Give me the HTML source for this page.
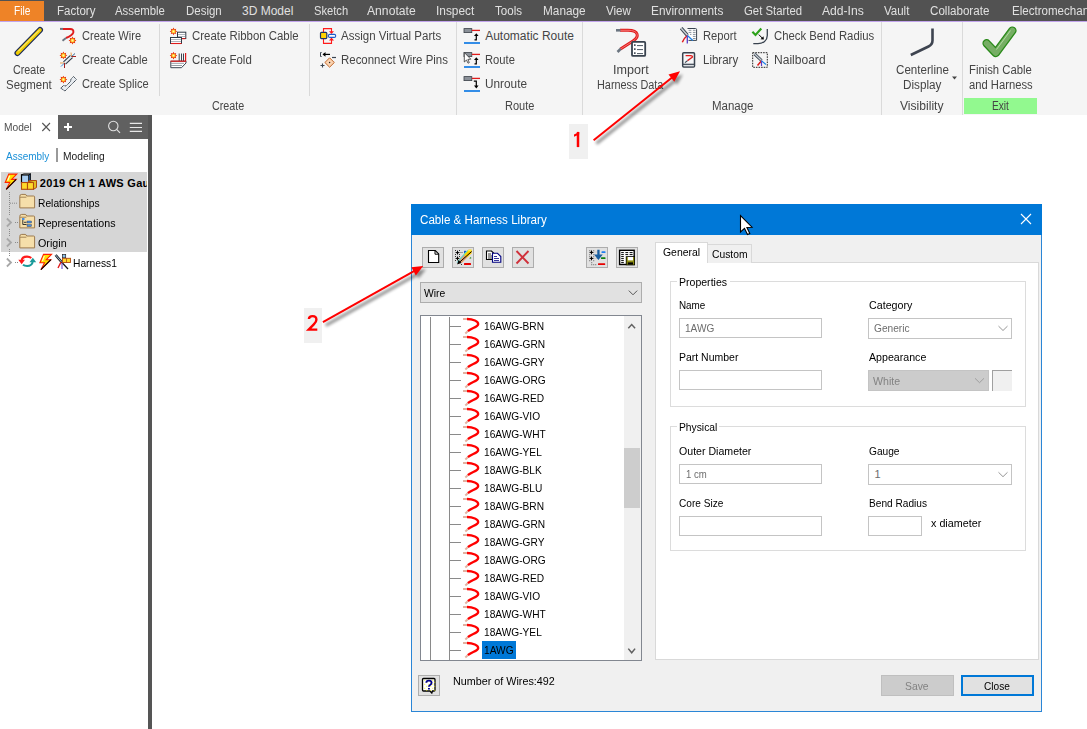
<!DOCTYPE html>
<html><head><meta charset="utf-8"><style>
html,body{margin:0;padding:0;width:1087px;height:729px;overflow:hidden;background:#fff;}
body{position:relative;font-family:"Liberation Sans", sans-serif;}
.t{position:absolute;line-height:1;white-space:nowrap;transform-origin:0 0;}
.b{position:absolute;}
svg{position:absolute;overflow:visible;}
</style></head><body>
<div class="b" style="left:0px;top:0px;width:1087px;height:22px;background:#525252"></div>
<div class="b" style="left:0px;top:21px;width:1087px;height:1px;background:#c2a4ec"></div>
<div class="b" style="left:0px;top:1px;width:44px;height:20px;background:#ee8327"></div>
<div class="t" style="left:13.60px;top:5px;font-size:12px;color:#ffffff;font-weight:normal;transform:scaleX(0.8443);">File</div>
<div class="t" style="left:56.60px;top:5px;font-size:12px;color:#e0e0e0;font-weight:normal;transform:scaleX(0.9598);">Factory</div>
<div class="t" style="left:114.80px;top:5px;font-size:12px;color:#e0e0e0;font-weight:normal;transform:scaleX(0.9469);">Assemble</div>
<div class="t" style="left:186.40px;top:5px;font-size:12px;color:#e0e0e0;font-weight:normal;transform:scaleX(0.9569);">Design</div>
<div class="t" style="left:242.00px;top:5px;font-size:12px;color:#e0e0e0;font-weight:normal;">3D Model</div>
<div class="t" style="left:313.50px;top:5px;font-size:12px;color:#e0e0e0;font-weight:normal;transform:scaleX(0.9303);">Sketch</div>
<div class="t" style="left:367.30px;top:5px;font-size:12px;color:#e0e0e0;font-weight:normal;transform:scaleX(1.0131);">Annotate</div>
<div class="t" style="left:436.01px;top:5px;font-size:12px;color:#e0e0e0;font-weight:normal;transform:scaleX(0.9907);">Inspect</div>
<div class="t" style="left:495.00px;top:5px;font-size:12px;color:#e0e0e0;font-weight:normal;transform:scaleX(0.9638);">Tools</div>
<div class="t" style="left:543.00px;top:5px;font-size:12px;color:#e0e0e0;font-weight:normal;transform:scaleX(0.9842);">Manage</div>
<div class="t" style="left:605.70px;top:5px;font-size:12px;color:#e0e0e0;font-weight:normal;transform:scaleX(0.9683);">View</div>
<div class="t" style="left:651.20px;top:5px;font-size:12px;color:#e0e0e0;font-weight:normal;transform:scaleX(0.9855);">Environments</div>
<div class="t" style="left:744.20px;top:5px;font-size:12px;color:#e0e0e0;font-weight:normal;transform:scaleX(0.9458);">Get Started</div>
<div class="t" style="left:821.80px;top:5px;font-size:12px;color:#e0e0e0;font-weight:normal;transform:scaleX(1.0107);">Add-Ins</div>
<div class="t" style="left:883.70px;top:5px;font-size:12px;color:#e0e0e0;font-weight:normal;transform:scaleX(0.9585);">Vault</div>
<div class="t" style="left:930.30px;top:5px;font-size:12px;color:#e0e0e0;font-weight:normal;transform:scaleX(0.9676);">Collaborate</div>
<div class="t" style="left:1011.80px;top:5px;font-size:12px;color:#e0e0e0;font-weight:normal;transform:scaleX(0.9632);">Electromechanical</div>
<div class="b" style="left:0px;top:22px;width:1087px;height:93px;background:#f5f5f5"></div>
<div class="b" style="left:159px;top:24px;width:1px;height:72px;background:#d9d9d9"></div>
<div class="b" style="left:309px;top:24px;width:1px;height:72px;background:#d9d9d9"></div>
<div class="b" style="left:456px;top:22px;width:1px;height:93px;background:#dadada"></div>
<div class="b" style="left:582px;top:22px;width:1px;height:93px;background:#dadada"></div>
<div class="b" style="left:881px;top:22px;width:1px;height:93px;background:#dadada"></div>
<div class="b" style="left:962px;top:22px;width:1px;height:93px;background:#dadada"></div>
<div class="t" style="left:12.70px;top:64px;font-size:12px;color:#454545;font-weight:normal;transform:scaleX(0.8970);">Create</div>
<div class="t" style="left:5.80px;top:79px;font-size:12px;color:#454545;font-weight:normal;transform:scaleX(0.9529);">Segment</div>
<div class="t" style="left:81.75px;top:30px;font-size:12px;color:#454545;font-weight:normal;transform:scaleX(0.9224);">Create Wire</div>
<div class="t" style="left:81.50px;top:54px;font-size:12px;color:#454545;font-weight:normal;transform:scaleX(0.9278);">Create Cable</div>
<div class="t" style="left:81.50px;top:78px;font-size:12px;color:#454545;font-weight:normal;transform:scaleX(0.9245);">Create Splice</div>
<div class="t" style="left:191.50px;top:30px;font-size:12px;color:#454545;font-weight:normal;transform:scaleX(0.9511);">Create Ribbon Cable</div>
<div class="t" style="left:191.50px;top:54px;font-size:12px;color:#454545;font-weight:normal;transform:scaleX(0.9529);">Create Fold</div>
<div class="t" style="left:341.30px;top:30px;font-size:12px;color:#454545;font-weight:normal;transform:scaleX(0.9589);">Assign Virtual Parts</div>
<div class="t" style="left:341.30px;top:54px;font-size:12px;color:#454545;font-weight:normal;transform:scaleX(0.9541);">Reconnect Wire Pins</div>
<div class="t" style="left:485.20px;top:30px;font-size:12px;color:#454545;font-weight:normal;">Automatic Route</div>
<div class="t" style="left:485.20px;top:54px;font-size:12px;color:#454545;font-weight:normal;transform:scaleX(0.9336);">Route</div>
<div class="t" style="left:485.20px;top:78px;font-size:12px;color:#454545;font-weight:normal;transform:scaleX(0.9833);">Unroute</div>
<div class="t" style="left:612.55px;top:64px;font-size:12px;color:#454545;font-weight:normal;transform:scaleX(1.0483);">Import</div>
<div class="t" style="left:597.00px;top:79px;font-size:12px;color:#454545;font-weight:normal;transform:scaleX(0.9051);">Harness Data</div>
<div class="t" style="left:702.80px;top:30px;font-size:12px;color:#454545;font-weight:normal;transform:scaleX(0.9323);">Report</div>
<div class="t" style="left:702.80px;top:54px;font-size:12px;color:#454545;font-weight:normal;transform:scaleX(0.9597);">Library</div>
<div class="t" style="left:773.60px;top:30px;font-size:12px;color:#454545;font-weight:normal;transform:scaleX(0.9447);">Check Bend Radius</div>
<div class="t" style="left:773.60px;top:54px;font-size:12px;color:#454545;font-weight:normal;transform:scaleX(1.0042);">Nailboard</div>
<div class="t" style="left:895.50px;top:64px;font-size:12px;color:#454545;font-weight:normal;transform:scaleX(0.9669);">Centerline</div>
<div class="t" style="left:903.00px;top:79px;font-size:12px;color:#454545;font-weight:normal;transform:scaleX(0.9760);">Display</div>
<div class="t" style="left:969.20px;top:64px;font-size:12px;color:#454545;font-weight:normal;transform:scaleX(0.9415);">Finish Cable</div>
<div class="t" style="left:968.60px;top:79px;font-size:12px;color:#454545;font-weight:normal;transform:scaleX(0.9362);">and Harness</div>
<div class="t" style="left:211.80px;top:100px;font-size:12px;color:#454545;font-weight:normal;transform:scaleX(0.8970);">Create</div>
<div class="t" style="left:504.50px;top:100px;font-size:12px;color:#454545;font-weight:normal;transform:scaleX(0.9181);">Route</div>
<div class="t" style="left:711.50px;top:100px;font-size:12px;color:#454545;font-weight:normal;transform:scaleX(0.9567);">Manage</div>
<div class="t" style="left:900.00px;top:100px;font-size:12px;color:#454545;font-weight:normal;transform:scaleX(1.0087);">Visibility</div>
<div class="b" style="left:964px;top:98px;width:73px;height:16px;background:#92f98f"></div>
<div class="t" style="left:991.50px;top:100px;font-size:12px;color:#454545;font-weight:normal;transform:scaleX(0.8466);">Exit</div>
<div class="b" style="left:0px;top:115px;width:148px;height:614px;background:#ffffff"></div>
<div class="b" style="left:58px;top:115px;width:90px;height:24px;background:#606060"></div>
<div class="b" style="left:148px;top:115px;width:4px;height:614px;background:#555555"></div>
<div class="t" style="left:3.80px;top:122px;font-size:11px;color:#505050;font-weight:normal;transform:scaleX(0.9283);">Model</div>
<div class="t" style="left:6.10px;top:151px;font-size:11px;color:#1a90d8;font-weight:normal;transform:scaleX(0.9091);">Assembly</div>
<div class="b" style="left:56px;top:148px;width:2px;height:14px;background:#9a9a9a"></div>
<div class="t" style="left:62.80px;top:151px;font-size:11px;color:#202020;font-weight:normal;transform:scaleX(0.9321);">Modeling</div>
<div class="b" style="left:1px;top:172px;width:146px;height:80px;background:#d6d6d6"></div>
<div class="b" style="left:0;top:170px;width:147px;height:30px;overflow:hidden">
<div class="t" style="left:39.80px;top:8px;font-size:11px;color:#000;font-weight:bold;letter-spacing:0.3px;">2019 CH 1 AWS Gauge</div>
</div>
<div class="t" style="left:38.00px;top:198px;font-size:11px;color:#000;font-weight:normal;transform:scaleX(0.9318);">Relationships</div>
<div class="t" style="left:38.00px;top:218px;font-size:11px;color:#000;font-weight:normal;transform:scaleX(0.9677);">Representations</div>
<div class="t" style="left:38.00px;top:238px;font-size:11px;color:#000;font-weight:normal;transform:scaleX(0.9752);">Origin</div>
<div class="t" style="left:73.40px;top:258px;font-size:11px;color:#000;font-weight:normal;transform:scaleX(0.9327);">Harness1</div>
<div class="b" style="left:411px;top:204px;width:631px;height:508px;background:#f0f0f0;border:1px solid #2b86d6;box-sizing:border-box"></div>
<div class="b" style="left:411px;top:204px;width:631px;height:31px;background:#0078d7"></div>
<div class="t" style="left:420.30px;top:214px;font-size:12px;color:#ffffff;font-weight:normal;transform:scaleX(0.9692);">Cable &amp; Harness Library</div>
<div class="b" style="left:422px;top:247px;width:22px;height:21px;background:#e1e1e1;border:1px solid #adadad;box-sizing:border-box"></div>
<div class="b" style="left:452px;top:247px;width:22px;height:21px;background:#e1e1e1;border:1px solid #adadad;box-sizing:border-box"></div>
<div class="b" style="left:482px;top:247px;width:22px;height:21px;background:#e1e1e1;border:1px solid #adadad;box-sizing:border-box"></div>
<div class="b" style="left:512px;top:247px;width:22px;height:21px;background:#e1e1e1;border:1px solid #adadad;box-sizing:border-box"></div>
<div class="b" style="left:586px;top:247px;width:22px;height:21px;background:#e1e1e1;border:1px solid #adadad;box-sizing:border-box"></div>
<div class="b" style="left:616px;top:247px;width:22px;height:21px;background:#e1e1e1;border:1px solid #adadad;box-sizing:border-box"></div>
<div class="b" style="left:420px;top:282px;width:222px;height:21px;background:#e1e1e1;border:1px solid #adadad;box-sizing:border-box"></div>
<div class="t" style="left:424.30px;top:288px;font-size:11px;color:#000;font-weight:normal;transform:scaleX(0.9427);">Wire</div>
<div class="b" style="left:420px;top:315px;width:222px;height:346px;background:#fff;border:1px solid #828790;box-sizing:border-box"></div>
<div class="b" style="left:624px;top:316px;width:17px;height:344px;background:#f0f0f0"></div>
<div class="b" style="left:624px;top:448px;width:16px;height:60px;background:#cdcdcd"></div>
<div class="b" style="left:430px;top:317px;width:1px;height:343px;background:#8a8a8a"></div>
<div class="b" style="left:449px;top:317px;width:1px;height:343px;background:#8a8a8a"></div>
<div class="b" style="left:449px;top:326px;width:12px;height:1px;background:#8a8a8a"></div>
<div class="t" style="left:483.70px;top:321px;font-size:11px;color:#000;font-weight:normal;transform:scaleX(0.9240);">16AWG-BRN</div>
<div class="b" style="left:449px;top:344px;width:12px;height:1px;background:#8a8a8a"></div>
<div class="t" style="left:483.70px;top:339px;font-size:11px;color:#000;font-weight:normal;transform:scaleX(0.9240);">16AWG-GRN</div>
<div class="b" style="left:449px;top:362px;width:12px;height:1px;background:#8a8a8a"></div>
<div class="t" style="left:483.70px;top:357px;font-size:11px;color:#000;font-weight:normal;transform:scaleX(0.9240);">16AWG-GRY</div>
<div class="b" style="left:449px;top:380px;width:12px;height:1px;background:#8a8a8a"></div>
<div class="t" style="left:483.70px;top:375px;font-size:11px;color:#000;font-weight:normal;transform:scaleX(0.9240);">16AWG-ORG</div>
<div class="b" style="left:449px;top:398px;width:12px;height:1px;background:#8a8a8a"></div>
<div class="t" style="left:483.70px;top:393px;font-size:11px;color:#000;font-weight:normal;transform:scaleX(0.9240);">16AWG-RED</div>
<div class="b" style="left:449px;top:416px;width:12px;height:1px;background:#8a8a8a"></div>
<div class="t" style="left:483.70px;top:411px;font-size:11px;color:#000;font-weight:normal;transform:scaleX(0.9240);">16AWG-VIO</div>
<div class="b" style="left:449px;top:434px;width:12px;height:1px;background:#8a8a8a"></div>
<div class="t" style="left:483.70px;top:429px;font-size:11px;color:#000;font-weight:normal;transform:scaleX(0.9240);">16AWG-WHT</div>
<div class="b" style="left:449px;top:452px;width:12px;height:1px;background:#8a8a8a"></div>
<div class="t" style="left:483.70px;top:447px;font-size:11px;color:#000;font-weight:normal;transform:scaleX(0.9240);">16AWG-YEL</div>
<div class="b" style="left:449px;top:470px;width:12px;height:1px;background:#8a8a8a"></div>
<div class="t" style="left:483.70px;top:465px;font-size:11px;color:#000;font-weight:normal;transform:scaleX(0.9240);">18AWG-BLK</div>
<div class="b" style="left:449px;top:488px;width:12px;height:1px;background:#8a8a8a"></div>
<div class="t" style="left:483.70px;top:483px;font-size:11px;color:#000;font-weight:normal;transform:scaleX(0.9240);">18AWG-BLU</div>
<div class="b" style="left:449px;top:506px;width:12px;height:1px;background:#8a8a8a"></div>
<div class="t" style="left:483.70px;top:501px;font-size:11px;color:#000;font-weight:normal;transform:scaleX(0.9240);">18AWG-BRN</div>
<div class="b" style="left:449px;top:524px;width:12px;height:1px;background:#8a8a8a"></div>
<div class="t" style="left:483.70px;top:519px;font-size:11px;color:#000;font-weight:normal;transform:scaleX(0.9240);">18AWG-GRN</div>
<div class="b" style="left:449px;top:542px;width:12px;height:1px;background:#8a8a8a"></div>
<div class="t" style="left:483.70px;top:537px;font-size:11px;color:#000;font-weight:normal;transform:scaleX(0.9240);">18AWG-GRY</div>
<div class="b" style="left:449px;top:560px;width:12px;height:1px;background:#8a8a8a"></div>
<div class="t" style="left:483.70px;top:555px;font-size:11px;color:#000;font-weight:normal;transform:scaleX(0.9240);">18AWG-ORG</div>
<div class="b" style="left:449px;top:578px;width:12px;height:1px;background:#8a8a8a"></div>
<div class="t" style="left:483.70px;top:573px;font-size:11px;color:#000;font-weight:normal;transform:scaleX(0.9240);">18AWG-RED</div>
<div class="b" style="left:449px;top:596px;width:12px;height:1px;background:#8a8a8a"></div>
<div class="t" style="left:483.70px;top:591px;font-size:11px;color:#000;font-weight:normal;transform:scaleX(0.9240);">18AWG-VIO</div>
<div class="b" style="left:449px;top:614px;width:12px;height:1px;background:#8a8a8a"></div>
<div class="t" style="left:483.70px;top:609px;font-size:11px;color:#000;font-weight:normal;transform:scaleX(0.9240);">18AWG-WHT</div>
<div class="b" style="left:449px;top:632px;width:12px;height:1px;background:#8a8a8a"></div>
<div class="t" style="left:483.70px;top:627px;font-size:11px;color:#000;font-weight:normal;transform:scaleX(0.9240);">18AWG-YEL</div>
<div class="b" style="left:449px;top:650px;width:12px;height:1px;background:#8a8a8a"></div>
<div class="b" style="left:482px;top:641px;width:34px;height:18px;background:#0078d7"></div>
<div class="t" style="left:483.70px;top:645px;font-size:11px;color:#000;font-weight:normal;transform:scaleX(0.9240);">1AWG</div>
<div class="b" style="left:418px;top:675px;width:22px;height:21px;background:#e1e1e1;border:1px solid #adadad;box-sizing:border-box"></div>
<div class="t" style="left:452.60px;top:676px;font-size:11px;color:#000;font-weight:normal;transform:scaleX(0.9787);">Number of Wires:492</div>
<div class="b" style="left:655px;top:262px;width:384px;height:398px;background:#fff;border:1px solid #d9d9d9;box-sizing:border-box"></div>
<div class="b" style="left:707px;top:244px;width:45px;height:19px;background:#f0f0f0;border:1px solid #d9d9d9;border-bottom:none;box-sizing:border-box"></div>
<div class="b" style="left:655px;top:242px;width:53px;height:21px;background:#fff;border:1px solid #d9d9d9;border-bottom:none;box-sizing:border-box"></div>
<div class="t" style="left:662.70px;top:247px;font-size:11px;color:#000;font-weight:normal;transform:scaleX(0.9486);">General</div>
<div class="t" style="left:711.80px;top:249px;font-size:11px;color:#000;font-weight:normal;transform:scaleX(0.9355);">Custom</div>
<div class="b" style="left:670px;top:281px;width:356px;height:126px;border:1px solid #dcdcdc;box-sizing:border-box"></div>
<div class="b" style="left:670px;top:426px;width:356px;height:125px;border:1px solid #dcdcdc;box-sizing:border-box"></div>
<div class="b" style="left:677px;top:276px;width:53px;height:10px;background:#fff"></div>
<div class="t" style="left:678.70px;top:277px;font-size:11px;color:#000;font-weight:normal;transform:scaleX(0.9579);">Properties</div>
<div class="b" style="left:677px;top:421px;width:42px;height:10px;background:#fff"></div>
<div class="t" style="left:678.50px;top:422px;font-size:11px;color:#000;font-weight:normal;transform:scaleX(0.9354);">Physical</div>
<div class="t" style="left:678.80px;top:300px;font-size:11px;color:#000;font-weight:normal;transform:scaleX(0.8965);">Name</div>
<div class="t" style="left:869.10px;top:300px;font-size:11px;color:#000;font-weight:normal;transform:scaleX(0.9727);">Category</div>
<div class="b" style="left:679px;top:318px;width:143px;height:20px;background:#fff;border:1px solid #c4c4c4;box-sizing:border-box"></div>
<div class="t" style="left:685.40px;top:323px;font-size:11px;color:#6d6d6d;font-weight:normal;transform:scaleX(0.9164);">1AWG</div>
<div class="b" style="left:868px;top:318px;width:144px;height:21px;background:#fff;border:1px solid #c4c4c4;box-sizing:border-box"></div>
<div class="t" style="left:874.40px;top:323px;font-size:11px;color:#6d6d6d;font-weight:normal;transform:scaleX(0.9227);">Generic</div>
<div class="t" style="left:678.80px;top:352px;font-size:11px;color:#000;font-weight:normal;transform:scaleX(0.9523);">Part Number</div>
<div class="t" style="left:869.10px;top:352px;font-size:11px;color:#000;font-weight:normal;transform:scaleX(0.9661);">Appearance</div>
<div class="b" style="left:679px;top:370px;width:143px;height:20px;background:#fff;border:1px solid #c4c4c4;box-sizing:border-box"></div>
<div class="b" style="left:868px;top:370px;width:121px;height:21px;background:#cccccc;border:1px solid #c4c4c4;box-sizing:border-box"></div>
<div class="t" style="left:873.00px;top:376px;font-size:11px;color:#838383;font-weight:normal;transform:scaleX(0.9643);">White</div>
<div class="b" style="left:992px;top:370px;width:20px;height:21px;background:#f0f0f0;border-top:1px solid #a0a0a0;border-left:1px solid #a0a0a0;box-sizing:border-box"></div>
<div class="t" style="left:678.80px;top:446px;font-size:11px;color:#000;font-weight:normal;transform:scaleX(0.9626);">Outer Diameter</div>
<div class="t" style="left:869.10px;top:446px;font-size:11px;color:#000;font-weight:normal;transform:scaleX(0.9238);">Gauge</div>
<div class="b" style="left:679px;top:464px;width:143px;height:20px;background:#fff;border:1px solid #c4c4c4;box-sizing:border-box"></div>
<div class="t" style="left:685.60px;top:469px;font-size:11px;color:#6d6d6d;font-weight:normal;transform:scaleX(0.8702);">1 cm</div>
<div class="b" style="left:868px;top:464px;width:144px;height:21px;background:#fff;border:1px solid #c4c4c4;box-sizing:border-box"></div>
<div class="t" style="left:874.40px;top:469px;font-size:11px;color:#6d6d6d;font-weight:normal;">1</div>
<div class="t" style="left:678.80px;top:498px;font-size:11px;color:#000;font-weight:normal;transform:scaleX(0.9174);">Core Size</div>
<div class="t" style="left:869.10px;top:498px;font-size:11px;color:#000;font-weight:normal;transform:scaleX(0.9199);">Bend Radius</div>
<div class="b" style="left:679px;top:516px;width:143px;height:20px;background:#fff;border:1px solid #c4c4c4;box-sizing:border-box"></div>
<div class="b" style="left:868px;top:516px;width:54px;height:20px;background:#fff;border:1px solid #c4c4c4;box-sizing:border-box"></div>
<div class="t" style="left:930.90px;top:518px;font-size:11px;color:#000;font-weight:normal;transform:scaleX(0.9789);">x diameter</div>
<div class="b" style="left:881px;top:675px;width:73px;height:21px;background:#cccccc;border:1px solid #bfbfbf;box-sizing:border-box"></div>
<div class="t" style="left:904.60px;top:681px;font-size:11px;color:#838383;font-weight:normal;transform:scaleX(0.9417);">Save</div>
<div class="b" style="left:961px;top:675px;width:73px;height:21px;background:#e1e1e1;border:2px solid #0078d7;box-sizing:border-box"></div>
<div class="t" style="left:983.50px;top:681px;font-size:11px;color:#000;font-weight:normal;transform:scaleX(0.9213);">Close</div>
<div class="b" style="left:569px;top:124px;width:19px;height:35px;background:#f0f0f0"></div>
<svg style="left:570px;top:128px" width="16" height="22" viewBox="570 128 16 22"><path d="M578,131.9 V147.1" stroke="#ff0000" stroke-width="2.5"/><path d="M579.2,131.9 L574,134.6 V136.8 L579.2,134.4 Z" fill="#ff0000"/></svg>
<div class="b" style="left:304px;top:308px;width:18px;height:35px;background:#f0f0f0"></div>
<svg style="left:304px;top:310px" width="16" height="24" viewBox="304 310 16 24"><path d="M308.9,319 C309,317 310.5,316.1 312.6,316.1 C315,316.1 316.4,317.6 316.4,319.7 C316.4,321.4 315.5,322.7 313.8,324.4 L308.7,329.6 H317.3" fill="none" stroke="#ff0000" stroke-width="2.4"/></svg>
<svg style="left:10px;top:24px" width="40" height="36" viewBox="10 24 40 36"><line x1="17.5" y1="53" x2="40" y2="30" stroke="#1a2a5a" stroke-width="6" stroke-linecap="round"/><line x1="17.5" y1="53" x2="40" y2="30" stroke="#f0cc00" stroke-width="3.6" stroke-linecap="round"/><line x1="18.5" y1="51" x2="39" y2="30.5" stroke="#fff7a8" stroke-width="1" stroke-linecap="round"/></svg>
<svg style="left:56px;top:24px" width="24" height="22" viewBox="56 24 24 22"><path d="M63,28.9 H70 Q74,29 73.3,32.5 Q72.3,35.5 66,38" fill="none" stroke="#e01b1b" stroke-width="2"/><path d="M60,28.9 H63" stroke="#6b7580" stroke-width="2"/><path d="M66,38 L62.5,40.7" stroke="#6b7580" stroke-width="2"/><polygon points="76.41,40.50 74.74,41.43 75.26,43.26 73.43,42.74 72.50,44.41 71.57,42.74 69.74,43.26 70.26,41.43 68.59,40.50 70.26,39.57 69.74,37.74 71.57,38.26 72.50,36.59 73.43,38.26 75.26,37.74 74.74,39.57" fill="#e8300c"/><circle cx="72.5" cy="40.5" r="2.03" fill="#ffc81a"/><circle cx="72.5" cy="40.5" r="0.98" fill="#fff6b0"/></svg>
<svg style="left:56px;top:48px" width="24" height="24" viewBox="56 48 24 24"><polygon points="67.31,55.40 65.64,56.33 66.16,58.16 64.33,57.64 63.40,59.31 62.47,57.64 60.64,58.16 61.16,56.33 59.49,55.40 61.16,54.47 60.64,52.64 62.47,53.16 63.40,51.49 64.33,53.16 66.16,52.64 65.64,54.47" fill="#e8300c"/><circle cx="63.4" cy="55.4" r="2.03" fill="#ffc81a"/><circle cx="63.4" cy="55.4" r="0.98" fill="#fff6b0"/><line x1="64.5" y1="63" x2="71.5" y2="56.5" stroke="#2f3a46" stroke-width="4.2"/><line x1="64.5" y1="63" x2="71.5" y2="56.5" stroke="#e8ecf0" stroke-width="2"/><path d="M71.5,56.5 L71,52.5 M71.5,56.5 L75,53.5 M71.5,56.5 L76,56.5" stroke-width="1" fill="none" stroke="#e8a050"/><path d="M71.5,56.5 L75,53.5" stroke="#3a90e0" stroke-width="1"/><path d="M71.5,56.5 L76,56.5" stroke="#a02020" stroke-width="1"/><path d="M64.5,63 L60,63" stroke="#e8a050" stroke-width="1"/><path d="M64.5,63 L61,66.5" stroke="#3a90e0" stroke-width="1"/><path d="M64.5,63 L64.5,68" stroke="#a02020" stroke-width="1"/></svg>
<svg style="left:56px;top:72px" width="24" height="24" viewBox="56 72 24 24"><polygon points="67.31,79.60 65.64,80.53 66.16,82.36 64.33,81.84 63.40,83.51 62.47,81.84 60.64,82.36 61.16,80.53 59.49,79.60 61.16,78.67 60.64,76.84 62.47,77.36 63.40,75.69 64.33,77.36 66.16,76.84 65.64,78.67" fill="#e8300c"/><circle cx="63.4" cy="79.6" r="2.03" fill="#ffc81a"/><circle cx="63.4" cy="79.6" r="0.98" fill="#fff6b0"/><path d="M60.8,88.2 L63.5,85.5 L66,86 L70.5,81.5 L71,79 L73.5,76.5 L76.5,79.5 L65,91 Z" fill="#e8ecf0" stroke="#2f3a46" stroke-width="1" stroke-dasharray="1.3,0.5"/></svg>
<svg style="left:166px;top:26px" width="24" height="22" viewBox="166 26 24 22"><polygon points="177.29,31.40 175.67,32.30 176.18,34.08 174.40,33.57 173.50,35.20 172.60,33.57 170.82,34.08 171.33,32.30 169.71,31.40 171.33,30.50 170.82,28.72 172.60,29.23 173.50,27.61 174.40,29.23 176.18,28.72 175.67,30.50" fill="#e8300c"/><circle cx="173.5" cy="31.4" r="1.97" fill="#ffc81a"/><circle cx="173.5" cy="31.4" r="0.95" fill="#fff6b0"/><rect x="177.5" y="32.2" width="8.3" height="6.3" fill="#fff" stroke="#2f3a46" stroke-width="1"/><path d="M178,34.5 H185 M178,36.5 H185" stroke="#9aa2ab" stroke-width="0.8"/><path d="M178,38.7 H185.5" stroke="#e01b1b" stroke-width="1"/><rect x="170.5" y="37.5" width="11" height="6" fill="#fff" stroke="#2f3a46" stroke-width="1"/><path d="M171,39.5 H181 M171,41.5 H181" stroke="#9aa2ab" stroke-width="0.8"/><path d="M171,43.5 H181.5" stroke="#e01b1b" stroke-width="1.1"/></svg>
<svg style="left:166px;top:50px" width="24" height="22" viewBox="166 50 24 22"><polygon points="177.29,55.60 175.67,56.50 176.18,58.28 174.40,57.77 173.50,59.40 172.60,57.77 170.82,58.28 171.33,56.50 169.71,55.60 171.33,54.70 170.82,52.92 172.60,53.43 173.50,51.80 174.40,53.43 176.18,52.92 175.67,54.70" fill="#e8300c"/><circle cx="173.5" cy="55.6" r="1.97" fill="#ffc81a"/><circle cx="173.5" cy="55.6" r="0.95" fill="#fff6b0"/><path d="M179.2,53.5 V61 M181.5,53.5 V61 M183.5,53.5 V61" stroke="#3a4450" stroke-width="1"/><path d="M185.6,53 V61.5" stroke="#e01b1b" stroke-width="1.2"/><path d="M170.8,61.2 H186 V63 L181.5,67.7 H170.8 Z" fill="#fff" stroke="#3a4450" stroke-width="1"/><path d="M171,63.3 H184 M171,65.5 H182" stroke="#8a929b" stroke-width="0.9"/><path d="M170.5,61.2 H186" stroke="#e01b1b" stroke-width="1.2"/></svg>
<svg style="left:316px;top:26px" width="24" height="22" viewBox="316 26 24 22"><path d="M323.5,32 V28.6 H331.5 V32 M323.5,38.8 V43.4 H331.5 V39.5" fill="none" stroke="#ff1a1a" stroke-width="1.1"/><path d="M329,31.2 H334 L331.5,34 Z M329,40.5 H334 L331.5,37.6 Z" fill="#ff1a1a"/><rect x="320.5" y="32.3" width="6.3" height="6.3" rx="1" fill="#ffd400" stroke="#1e3464" stroke-width="1.2"/><rect x="328.4" y="34.4" width="7.3" height="3" rx="1.4" fill="#fff" stroke="#1e5ac8" stroke-width="1.1"/></svg>
<svg style="left:316px;top:48px" width="24" height="24" viewBox="316 48 24 24"><path d="M321.6,52.5 H320.5 V56.5 H321.6" fill="none" stroke="#3a4450" stroke-width="1"/><path d="M323,54.4 H330" stroke="#000" stroke-width="1.2"/><path d="M322.5,54.4 L325.5,52 V56.8 Z" fill="#000"/><path d="M332,57.5 H336" stroke="#3a4450" stroke-width="1.2"/><path d="M320.5,65.5 H324.5 M322.5,63.5 V67.5" stroke="#3a4450" stroke-width="1.1"/><path d="M329.6,57.8 L334.3,62.5 L329.6,67.2 L324.9,62.5 Z" fill="#fbd3b0" stroke="#c0662a" stroke-width="1"/><circle cx="329.6" cy="62.5" r="0.7" fill="#222"/></svg>
<svg style="left:460px;top:24px" width="24" height="22" viewBox="460 24 24 22"><rect x="464" y="28.6" width="7.8" height="4" fill="#8a9098" stroke="#3a4048" stroke-width="0.8"/><path d="M472,30.4 H480" stroke="#e01b1b" stroke-width="1.3"/><path d="M464,43 H480" stroke="#1e82e6" stroke-width="1.8"/><path d="M476.3,35.5 V39.8 H474.5" fill="none" stroke="#000" stroke-width="1.2"/><path d="M474,36 L476.3,33.2 L478.6,36 Z" fill="#000"/></svg>
<svg style="left:460px;top:48px" width="24" height="22" viewBox="460 48 24 22"><rect x="464" y="52.6" width="7.8" height="4" fill="#8a9098" stroke="#3a4048" stroke-width="0.8"/><path d="M472,54.4 H480" stroke="#e01b1b" stroke-width="1.3"/><path d="M464,67 H480" stroke="#1e82e6" stroke-width="1.8"/><path d="M476.3,59.5 V63.8 H474.5" fill="none" stroke="#000" stroke-width="1.2"/><path d="M474,60 L476.3,57.2 L478.6,60 Z" fill="#000"/><path d="M464.3,52.5 V62 L466.5,60 L468,63.2 L469.3,62.6 L467.9,59.4 L470.8,59.2 Z" fill="#fff" stroke="#333" stroke-width="0.8"/></svg>
<svg style="left:460px;top:72px" width="24" height="22" viewBox="460 72 24 22"><rect x="464" y="76.6" width="7.8" height="4" fill="#8a9098" stroke="#3a4048" stroke-width="0.8"/><path d="M472,78.4 H480" stroke="#e01b1b" stroke-width="1.3"/><path d="M464,91 H480" stroke="#1e82e6" stroke-width="1.8"/><path d="M473.8,81.2 H476.3 V86" fill="none" stroke="#000" stroke-width="1.2"/><path d="M474,85.6 L476.3,88.4 L478.6,85.6 Z" fill="#000"/></svg>
<svg style="left:612px;top:24px" width="38" height="36" viewBox="612 24 38 36"><path d="M620,30.3 H628 C639,30.3 639.5,37 633,41 L620.5,49" fill="none" stroke="#e01b1b" stroke-width="3"/><path d="M620,30.3 H628 C639,30.3 639.5,37 633,41 L620.5,49" fill="none" stroke="#ff9a9a" stroke-width="0.7"/><path d="M616,30.3 H620.5" stroke="#6b7580" stroke-width="2.6"/><path d="M620.8,48.8 L617.5,52" stroke="#6b7580" stroke-width="2.6"/><rect x="632" y="41.9" width="13.2" height="14" rx="1" fill="#fff" stroke="#38424e" stroke-width="1.8"/><rect x="634" y="44.3" width="1.6" height="1.6" fill="#38424e"/><rect x="634" y="48.3" width="1.6" height="1.6" fill="#38424e"/><rect x="634" y="52.3" width="1.6" height="1.6" fill="#38424e"/><path d="M637,45.6 H643 M637,49.6 H643 M637,53.6 H643" stroke="#4a5560" stroke-width="1"/></svg>
<svg style="left:678px;top:26px" width="22" height="22" viewBox="678 26 22 22"><path d="M687.5,28.5 H695.5 Q696.6,28.5 696.6,29.6 V40.4 H688.5" fill="#fff" stroke="#38424e" stroke-width="1"/><path d="M688.6,30.3 H691.4 M692.9,30.3 H695.6 M688.6,32.4 H691.4 M692.9,32.4 H695.6 M690,34.4 H691.4 M692.9,34.4 H695.6 M692.9,36.4 H695.6 M692.9,38.5 H695.6" stroke="#8a949e" stroke-width="1"/><path d="M681.2,28.2 L687.4,35.3" stroke="#38424e" stroke-width="3.4"/><path d="M681.2,28.2 L687.4,35.3" stroke="#c9d0d6" stroke-width="1.5"/><path d="M687.4,35.5 Q684,38 682.3,42.3" fill="none" stroke="#e01b1b" stroke-width="1.5"/><path d="M687.3,35.5 V43.5" stroke="#5a3cc8" stroke-width="1.3"/><path d="M687.4,35.5 L692.8,40.5" stroke="#1e82e6" stroke-width="1.3"/></svg>
<svg style="left:678px;top:50px" width="22" height="22" viewBox="678 50 22 22"><rect x="682.7" y="52.7" width="11.8" height="14.4" rx="1" fill="#f4f6f8" stroke="#38424e" stroke-width="1.5"/><path d="M683,64.3 H694.4" stroke="#38424e" stroke-width="1.2"/><path d="M684,65.8 H694" stroke="#c8ccd0" stroke-width="0.8"/><path d="M685.6,55.6 H690.5 Q693.2,55.8 692.2,57.3 L687.5,60.6" fill="none" stroke="#e01b1b" stroke-width="1.3"/><path d="M687.5,60.6 L685,62.6" stroke="#38424e" stroke-width="1.2"/></svg>
<svg style="left:748px;top:26px" width="24" height="22" viewBox="748 26 24 22"><path d="M752.4,31.8 L755.5,35 L761.3,28.6" fill="none" stroke="#2ca21a" stroke-width="2.2"/><path d="M767.3,29 V35.5 C767.3,40.5 763,43.6 758,43.6 H753.3" fill="none" stroke="#38424e" stroke-width="1.3"/><path d="M758.8,34.6 L762.5,38.3" stroke="#000" stroke-width="1"/><path d="M763.8,39.6 L760.5,39.3 L763.5,36.3 Z" fill="#000"/></svg>
<svg style="left:748px;top:50px" width="24" height="22" viewBox="748 50 24 22"><rect x="752.7" y="52.7" width="14.6" height="14.6" fill="none" stroke="#222" stroke-width="1" stroke-dasharray="1.6,1"/><path d="M754.5,53.8 L761.5,60.5" stroke="#38424e" stroke-width="3"/><path d="M754.5,53.8 L761.5,60.5" stroke="#c5ccd3" stroke-width="1.3"/><path d="M761.5,60.8 L757.5,65.5" stroke="#e01b1b" stroke-width="1.5"/><path d="M761.5,60.8 V66" stroke="#5a3cc8" stroke-width="1.2"/><path d="M761.5,60.8 L766,64.5" stroke="#1e82e6" stroke-width="1.2"/></svg>
<svg style="left:905px;top:24px" width="35" height="36" viewBox="905 24 35 36"><path d="M932.5,28.4 V40.5 Q932.5,44.5 928.5,46.5 L910.8,55" fill="none" stroke="#3e4450" stroke-width="2.6"/></svg>
<svg style="left:948px;top:72px" width="12" height="10" viewBox="948 72 12 10"><path d="M952,76.5 H957 L954.5,79.5 Z" fill="#444"/></svg>
<svg style="left:978px;top:24px" width="44" height="38" viewBox="978 24 44 38"><path d="M986.6,43.3 L995.8,53 L1012.4,30.6" fill="none" stroke="#2a8a1a" stroke-width="8.4" stroke-linecap="round" stroke-linejoin="round"/><path d="M986.6,43.3 L995.8,53 L1012.4,30.6" fill="none" stroke="#76ae64" stroke-width="5.8" stroke-linecap="round" stroke-linejoin="round"/><path d="M996.5,49.5 L1010.5,30.5" fill="none" stroke="#b0dca0" stroke-width="1"/></svg>
<svg style="left:38px;top:118px" width="16" height="16" viewBox="38 118 16 16"><path d="M42.3,123 L50,131 M50,123 L42.3,131" stroke="#555" stroke-width="1.1"/></svg>
<svg style="left:60px;top:119px" width="16" height="16" viewBox="60 119 16 16"><path d="M64,127 H72 M68,123 V131" stroke="#fff" stroke-width="2"/></svg>
<svg style="left:104px;top:118px" width="20" height="20" viewBox="104 118 20 20"><circle cx="113.3" cy="126" r="4.7" fill="none" stroke="#e0e0e0" stroke-width="1.1"/><path d="M116.6,129.4 L120,132.8" stroke="#e0e0e0" stroke-width="1.2"/></svg>
<svg style="left:126px;top:118px" width="20" height="20" viewBox="126 118 20 20"><path d="M129.8,123.4 H142 M129.8,127.5 H142 M129.8,131.4 H142" stroke="#e8e8e8" stroke-width="1.1"/></svg>
<svg style="left:0px;top:170px" width="148" height="105" viewBox="0 170 148 105"><g transform="translate(4.6,173.8)"><path d="M12.2,0.3 L4.2,0.3 L0.6,8.6 L5.2,8.6 L1.6,15.6 L11.6,5.6 L7,5.6 Z" fill="#ffe000" stroke="#ff2200" stroke-width="1.1" stroke-linejoin="miter"/><path d="M11.6,5.6 L1.6,15.6" stroke="#000" stroke-width="1.1"/><path d="M5,2 L3,7" stroke="#fffbd0" stroke-width="1.2"/></g><rect x="21.5" y="174.8" width="7.5" height="8" fill="#a9cdf0" stroke="#000" stroke-width="1.2"/><path d="M21.5,174.8 L24,173.8 H30.5 L29,174.8 Z" fill="#fff" stroke="#000" stroke-width="0.8"/><path d="M29,174.8 L30.5,173.8 V181.5 L29,182.8 Z" fill="#3b7ecb" stroke="#000" stroke-width="0.8"/><rect x="21.5" y="182.5" width="6" height="6.8" fill="#ffd92a" stroke="#b04a10" stroke-width="1.1"/><rect x="27.5" y="182.5" width="6" height="6.8" fill="#ffd92a" stroke="#b04a10" stroke-width="1.1"/><path d="M28,181.5 L30,180.5 H36.5 V187.5 L33.5,189.3 V182.5 Z" fill="#e0c020" stroke="#b04a10" stroke-width="1"/><g transform="translate(19.2,193.8)"><path d="M0.6,2.5 Q0.6,0.6 2.5,0.6 H6 Q7,0.6 7.5,2.2 H14.4 Q15.4,2.2 15.4,3.2 V14.1 H0.6 Z" fill="#f6dfaa" stroke="#9c7a4e" stroke-width="1"/><path d="M0.8,3.4 H7.2" stroke="#9c7a4e" stroke-width="0.9"/></g><g transform="translate(19.2,213.8)"><path d="M0.6,2.5 Q0.6,0.6 2.5,0.6 H6 Q7,0.6 7.5,2.2 H14.4 Q15.4,2.2 15.4,3.2 V14.1 H0.6 Z" fill="#f6dfaa" stroke="#9c7a4e" stroke-width="1"/><path d="M0.8,3.4 H7.2" stroke="#9c7a4e" stroke-width="0.9"/></g><rect x="22" y="218" width="2.5" height="2" fill="#4a90e0"/><path d="M22.8,220 V224.5 H26.5 M24,222.3 H26.5" stroke="#222" stroke-width="0.9" fill="none"/><rect x="27" y="221" width="4.5" height="2" fill="#4a90e0" stroke="#334" stroke-width="0.4"/><rect x="27" y="224.6" width="4.5" height="2" fill="#4a90e0" stroke="#334" stroke-width="0.4"/><g transform="translate(19.2,233.8)"><path d="M0.6,2.5 Q0.6,0.6 2.5,0.6 H6 Q7,0.6 7.5,2.2 H14.4 Q15.4,2.2 15.4,3.2 V14.1 H0.6 Z" fill="#f6dfaa" stroke="#9c7a4e" stroke-width="1"/><path d="M0.8,3.4 H7.2" stroke="#9c7a4e" stroke-width="0.9"/></g><path d="M9.5,192 V216 M9.5,229 V236 M9.5,249 V256" stroke="#8a8a8a" stroke-width="1" stroke-dasharray="1,1"/><path d="M10,203.2 H18" stroke="#8a8a8a" stroke-width="1" stroke-dasharray="1,1"/><path d="M15,222.5 H18" stroke="#8a8a8a" stroke-width="1" stroke-dasharray="1,1"/><path d="M6.9,218.5 L11,222.5 L6.9,226.5" fill="none" stroke="#a8a8a8" stroke-width="1.8"/><path d="M15,242.5 H18" stroke="#8a8a8a" stroke-width="1" stroke-dasharray="1,1"/><path d="M6.9,238.5 L11,242.5 L6.9,246.5" fill="none" stroke="#a8a8a8" stroke-width="1.8"/><path d="M15,262.5 H18" stroke="#8a8a8a" stroke-width="1" stroke-dasharray="1,1"/><path d="M6.9,258.5 L11,262.5 L6.9,266.5" fill="none" stroke="#a8a8a8" stroke-width="1.8"/><path d="M21.6,261 C21.8,258 24.2,256.6 27,256.6 C28.8,256.6 30.2,257.1 31.3,258" fill="none" stroke="#ff1a1a" stroke-width="2.1"/><path d="M18.3,259.8 L25,259.8 L21.6,264.2 Z" fill="#ff1a1a"/><path d="M32.8,261 C32.6,264.3 30,266 27.2,266 C25.4,266 24,265.6 23,264.8" fill="none" stroke="#1a9a9a" stroke-width="2.1"/><path d="M29.5,262.2 L36.2,262.2 L32.8,257.8 Z" fill="#1a9a9a"/><g transform="translate(39.3,254.1)"><path d="M12.2,0.3 L4.2,0.3 L0.6,8.6 L5.2,8.6 L1.6,15.6 L11.6,5.6 L7,5.6 Z" fill="#ffe000" stroke="#ff2200" stroke-width="1.1" stroke-linejoin="miter"/><path d="M11.6,5.6 L1.6,15.6" stroke="#000" stroke-width="1.1"/><path d="M5,2 L3,7" stroke="#fffbd0" stroke-width="1.2"/></g><path d="M55.6,255 L62,262.5" stroke="#222" stroke-width="2.6"/><path d="M55.6,255 L62,262.5" stroke="#9ab4d0" stroke-width="1"/><path d="M61.5,262 L68,269" stroke="#111" stroke-width="1.2"/><path d="M61,262 L58,268" stroke="#e01b1b" stroke-width="1.4"/><path d="M62,263 V269" stroke="#5a3cc8" stroke-width="1"/><rect x="62.5" y="254.6" width="3.2" height="3.2" fill="#8ac0ee" stroke="#222" stroke-width="0.7"/><rect x="62.5" y="258.3" width="8" height="4.2" fill="#ffd92a" stroke="#b04a10" stroke-width="0.9"/><path d="M66.5,258.3 V262.5" stroke="#b04a10" stroke-width="0.8"/></svg>
<svg style="left:1016px;top:209px" width="20" height="20" viewBox="1016 209 20 20"><path d="M1021,214 L1031,224 M1031,214 L1021,224" stroke="#fff" stroke-width="1.1"/></svg>
<svg style="left:424px;top:248px" width="18" height="18" viewBox="424 248 18 18"><path d="M428.5,250.5 H435.3 L438.7,253.9 V262.5 H428.5 Z" fill="#fff" stroke="#000" stroke-width="1.1"/><path d="M435,250.5 V254.2 H438.7" fill="none" stroke="#000" stroke-width="1"/></svg>
<svg style="left:452px;top:247px" width="22" height="21" viewBox="452 247 22 21"><rect x="455" y="250" width="1" height="1" fill="#333"/><rect x="459" y="250" width="1" height="1" fill="#333"/><rect x="455" y="254" width="1" height="1" fill="#333"/><rect x="459" y="254" width="1" height="1" fill="#333"/><rect x="455" y="256" width="1" height="1" fill="#333"/><rect x="459" y="256" width="1" height="1" fill="#333"/><rect x="455" y="260" width="1" height="1" fill="#333"/><rect x="461" y="264" width="1" height="1" fill="#333"/><polygon points="457.5,250.0 458.2,251.9 460.1,252.6 458.2,253.29999999999998 457.5,255.2 456.8,253.29999999999998 454.9,252.6 456.8,251.9" fill="#000"/><polygon points="457.5,255.79999999999998 458.2,257.7 460.1,258.4 458.2,259.09999999999997 457.5,261.0 456.8,259.09999999999997 454.9,258.4 456.8,257.7" fill="#000"/><path d="M460,252.5 H463" stroke="#888" stroke-width="0.8"/><rect x="464" y="250.8" width="2.2" height="2.6" fill="#1a5ad0"/><path d="M457.5,264 L459,259 L468.5,249.8 L471.5,249.8 L471.5,253.2 L462.3,262.5 Z" fill="#e0a070"/><path d="M463.5,254.2 L468.5,249.8 L471.5,249.8 L471.5,253.2 L466.8,257.6 Z" fill="#ffd000"/><path d="M468,251 L471.5,250" stroke="#ffff40" stroke-width="1"/><path d="M457.8,263.8 L471.6,251.5" stroke="#000" stroke-width="1"/><path d="M457.2,262.5 L467.5,250.5" stroke="#30e8f0" stroke-width="1"/><path d="M457.3,264.2 L458.4,260 L461.5,263 Z" fill="#000"/><path d="M469.3,258.6 Q470.5,256.5 471.2,257.5 V258.6 Z" fill="#108010"/><rect x="464" y="263" width="7" height="2" rx="0.5" fill="#e80000"/></svg>
<svg style="left:482px;top:247px" width="22" height="21" viewBox="482 247 22 21"><path d="M486.5,251 H491.5 L494.5,254 V259.5 H486.5 Z" fill="#fff" stroke="#000" stroke-width="1.1"/><path d="M488,254 H491 M488,256 H493 M488,258 H493" stroke="#000" stroke-width="0.8"/><path d="M492.5,253.3 H497.5 L500.8,256.6 V262.3 H492.5 Z" fill="#fff" stroke="#000080" stroke-width="1.1"/><path d="M494,256.5 H497 M494,258.5 H499 M494,260.5 H499" stroke="#000080" stroke-width="0.8"/></svg>
<svg style="left:512px;top:247px" width="22" height="21" viewBox="512 247 22 21"><path d="M516.5,251 L528.5,263.5 M528.5,251 L516.5,263.5" stroke="#d0303a" stroke-width="1.9"/></svg>
<svg style="left:586px;top:247px" width="22" height="21" viewBox="586 247 22 21"><rect x="589.3" y="250.3" width="0.9" height="0.9" fill="#444"/><rect x="593.3" y="250.3" width="0.9" height="0.9" fill="#444"/><rect x="589.3" y="254.3" width="0.9" height="0.9" fill="#444"/><rect x="593.3" y="254.3" width="0.9" height="0.9" fill="#444"/><rect x="589.3" y="256.3" width="0.9" height="0.9" fill="#444"/><rect x="593.3" y="256.3" width="0.9" height="0.9" fill="#444"/><rect x="589.3" y="260.3" width="0.9" height="0.9" fill="#444"/><rect x="593.3" y="260.3" width="0.9" height="0.9" fill="#444"/><rect x="591.3" y="262.3" width="0.9" height="0.9" fill="#444"/><rect x="591.3" y="264.3" width="0.9" height="0.9" fill="#444"/><rect x="593.3" y="264.3" width="0.9" height="0.9" fill="#444"/><rect x="595.3" y="264.3" width="0.9" height="0.9" fill="#444"/><polygon points="591.5,249.8 592.2,251.70000000000002 594.1,252.4 592.2,253.1 591.5,255.0 590.8,253.1 588.9,252.4 590.8,251.70000000000002" fill="#000"/><polygon points="591.5,255.79999999999998 592.2,257.7 594.1,258.4 592.2,259.09999999999997 591.5,261.0 590.8,259.09999999999997 588.9,258.4 590.8,257.7" fill="#000"/><path d="M594,252 H598 M594,258.5 H598" stroke="#bbb" stroke-width="0.5"/><path d="M597.3,249.8 H599.6 V254.5 H602.8 L598.4,260 L594,254.5 H597.3 Z" fill="#1a5fa0"/><rect x="601.5" y="251.2" width="4" height="1.8" rx="0.6" fill="#1e7ef0"/><rect x="601" y="257.2" width="4.5" height="1.8" rx="0.6" fill="#108010"/><rect x="598" y="263.2" width="7.2" height="1.9" rx="0.5" fill="#e80000"/></svg>
<svg style="left:616px;top:247px" width="22" height="21" viewBox="616 247 22 21"><rect x="619.6" y="250.3" width="14.6" height="14.2" fill="#fff" stroke="#000" stroke-width="1.4"/><path d="M621.2,252.6 H623.8 M625.4,252.6 H628.2 M629.6,252.6 H632.6 M621.2,254.6 H623.8 M625.4,254.6 H628.2 M629.6,254.6 H632.6 M621.2,256.6 H623.8 M621.2,258.6 H623.8 M621.2,260.6 H623.8 M621.2,262.6 H623.8" stroke="#000" stroke-width="1"/><rect x="625.8" y="256.2" width="9.2" height="9" fill="#000"/><rect x="626.6" y="257" width="7.6" height="7.6" fill="#8c8c10"/><rect x="627.8" y="257" width="5.2" height="3.4" fill="#fff"/><rect x="627.8" y="262.4" width="5.2" height="2.2" fill="#000"/></svg>
<svg style="left:625px;top:286px" width="15" height="12" viewBox="625 286 15 12"><path d="M628.8,290.6 L633,294.8 L637.2,290.6" fill="none" stroke="#555" stroke-width="1"/></svg>
<svg style="left:995px;top:322px" width="16" height="12" viewBox="995 322 16 12"><path d="M998.5,326.1 L1003,330.5 L1007.5,326.1" fill="none" stroke="#8a8a8a" stroke-width="0.9"/></svg>
<svg style="left:995px;top:468px" width="16" height="12" viewBox="995 468 16 12"><path d="M998.5,472.3 L1003,476.7 L1007.5,472.3" fill="none" stroke="#8a8a8a" stroke-width="0.9"/></svg>
<svg style="left:971px;top:374px" width="16" height="12" viewBox="971 374 16 12"><path d="M975.0,378.3 L979.5,382.7 L984.0,378.3" fill="none" stroke="#9a9a9a" stroke-width="0.9"/></svg>
<svg style="left:624px;top:320px" width="14" height="12" viewBox="624 320 14 12"><path d="M628.3,328.3 L631.7,324.6 L635.1,328.3" fill="none" stroke="#606060" stroke-width="1.5"/></svg>
<svg style="left:624px;top:644px" width="14" height="12" viewBox="624 644 14 12"><path d="M628.3,648.6 L631.7,652.8 L635.1,648.6" fill="none" stroke="#606060" stroke-width="1.5"/></svg>
<svg style="left:418px;top:675px" width="22" height="21" viewBox="418 675 22 21"><path d="M423.5,678.5 H434 Q435,678.5 435,679.5 V690 Q435,691 434,691 H432.5 L431.8,693 L430,691 H423.5 Q422.5,691 422.5,690 V679.5 Q422.5,678.5 423.5,678.5 Z" fill="#fff" stroke="#000" stroke-width="1.3"/><rect x="424.3" y="679.8" width="0.9" height="0.9" fill="#f0f000"/><rect x="424.3" y="683.8" width="0.9" height="0.9" fill="#f0f000"/><rect x="424.3" y="687.8" width="0.9" height="0.9" fill="#f0f000"/><rect x="426.3" y="681.8" width="0.9" height="0.9" fill="#f0f000"/><rect x="426.3" y="685.8" width="0.9" height="0.9" fill="#f0f000"/><rect x="426.3" y="689.8" width="0.9" height="0.9" fill="#f0f000"/><rect x="428.3" y="679.8" width="0.9" height="0.9" fill="#f0f000"/><rect x="428.3" y="683.8" width="0.9" height="0.9" fill="#f0f000"/><rect x="428.3" y="687.8" width="0.9" height="0.9" fill="#f0f000"/><rect x="430.3" y="681.8" width="0.9" height="0.9" fill="#f0f000"/><rect x="430.3" y="685.8" width="0.9" height="0.9" fill="#f0f000"/><rect x="430.3" y="689.8" width="0.9" height="0.9" fill="#f0f000"/><rect x="432.3" y="679.8" width="0.9" height="0.9" fill="#f0f000"/><rect x="432.3" y="683.8" width="0.9" height="0.9" fill="#f0f000"/><rect x="432.3" y="687.8" width="0.9" height="0.9" fill="#f0f000"/><rect x="434.3" y="681.8" width="0.9" height="0.9" fill="#f0f000"/><rect x="434.3" y="685.8" width="0.9" height="0.9" fill="#f0f000"/><rect x="434.3" y="689.8" width="0.9" height="0.9" fill="#f0f000"/><path d="M426.3,682.8 Q426.3,680.6 428.9,680.6 Q431.6,680.6 431.6,682.8 Q431.6,684.3 429.8,685.2 Q428.9,685.7 428.9,686.8" fill="none" stroke="#00008a" stroke-width="1.8"/><rect x="428" y="688" width="1.9" height="1.5" fill="#00008a"/></svg>
<svg style="left:458px;top:316px" width="24" height="344" viewBox="458 316 24 344"><path d="M463,319 H467" stroke="#e3b0a0" stroke-width="2"/><path d="M467,319 C473,319 478.3,321.3 478.2,324.1 C478,327 471.5,328 467.8,331.2" fill="none" stroke="#ff0000" stroke-width="2.3"/><path d="M467.8,331.2 L465.3,333.4" stroke="#e3b0a0" stroke-width="2"/><path d="M463,337 H467" stroke="#e3b0a0" stroke-width="2"/><path d="M467,337 C473,337 478.3,339.3 478.2,342.1 C478,345 471.5,346 467.8,349.2" fill="none" stroke="#ff0000" stroke-width="2.3"/><path d="M467.8,349.2 L465.3,351.4" stroke="#e3b0a0" stroke-width="2"/><path d="M463,355 H467" stroke="#e3b0a0" stroke-width="2"/><path d="M467,355 C473,355 478.3,357.3 478.2,360.1 C478,363 471.5,364 467.8,367.2" fill="none" stroke="#ff0000" stroke-width="2.3"/><path d="M467.8,367.2 L465.3,369.4" stroke="#e3b0a0" stroke-width="2"/><path d="M463,373 H467" stroke="#e3b0a0" stroke-width="2"/><path d="M467,373 C473,373 478.3,375.3 478.2,378.1 C478,381 471.5,382 467.8,385.2" fill="none" stroke="#ff0000" stroke-width="2.3"/><path d="M467.8,385.2 L465.3,387.4" stroke="#e3b0a0" stroke-width="2"/><path d="M463,391 H467" stroke="#e3b0a0" stroke-width="2"/><path d="M467,391 C473,391 478.3,393.3 478.2,396.1 C478,399 471.5,400 467.8,403.2" fill="none" stroke="#ff0000" stroke-width="2.3"/><path d="M467.8,403.2 L465.3,405.4" stroke="#e3b0a0" stroke-width="2"/><path d="M463,409 H467" stroke="#e3b0a0" stroke-width="2"/><path d="M467,409 C473,409 478.3,411.3 478.2,414.1 C478,417 471.5,418 467.8,421.2" fill="none" stroke="#ff0000" stroke-width="2.3"/><path d="M467.8,421.2 L465.3,423.4" stroke="#e3b0a0" stroke-width="2"/><path d="M463,427 H467" stroke="#e3b0a0" stroke-width="2"/><path d="M467,427 C473,427 478.3,429.3 478.2,432.1 C478,435 471.5,436 467.8,439.2" fill="none" stroke="#ff0000" stroke-width="2.3"/><path d="M467.8,439.2 L465.3,441.4" stroke="#e3b0a0" stroke-width="2"/><path d="M463,445 H467" stroke="#e3b0a0" stroke-width="2"/><path d="M467,445 C473,445 478.3,447.3 478.2,450.1 C478,453 471.5,454 467.8,457.2" fill="none" stroke="#ff0000" stroke-width="2.3"/><path d="M467.8,457.2 L465.3,459.4" stroke="#e3b0a0" stroke-width="2"/><path d="M463,463 H467" stroke="#e3b0a0" stroke-width="2"/><path d="M467,463 C473,463 478.3,465.3 478.2,468.1 C478,471 471.5,472 467.8,475.2" fill="none" stroke="#ff0000" stroke-width="2.3"/><path d="M467.8,475.2 L465.3,477.4" stroke="#e3b0a0" stroke-width="2"/><path d="M463,481 H467" stroke="#e3b0a0" stroke-width="2"/><path d="M467,481 C473,481 478.3,483.3 478.2,486.1 C478,489 471.5,490 467.8,493.2" fill="none" stroke="#ff0000" stroke-width="2.3"/><path d="M467.8,493.2 L465.3,495.4" stroke="#e3b0a0" stroke-width="2"/><path d="M463,499 H467" stroke="#e3b0a0" stroke-width="2"/><path d="M467,499 C473,499 478.3,501.3 478.2,504.1 C478,507 471.5,508 467.8,511.2" fill="none" stroke="#ff0000" stroke-width="2.3"/><path d="M467.8,511.2 L465.3,513.4" stroke="#e3b0a0" stroke-width="2"/><path d="M463,517 H467" stroke="#e3b0a0" stroke-width="2"/><path d="M467,517 C473,517 478.3,519.3 478.2,522.1 C478,525 471.5,526 467.8,529.2" fill="none" stroke="#ff0000" stroke-width="2.3"/><path d="M467.8,529.2 L465.3,531.4" stroke="#e3b0a0" stroke-width="2"/><path d="M463,535 H467" stroke="#e3b0a0" stroke-width="2"/><path d="M467,535 C473,535 478.3,537.3 478.2,540.1 C478,543 471.5,544 467.8,547.2" fill="none" stroke="#ff0000" stroke-width="2.3"/><path d="M467.8,547.2 L465.3,549.4" stroke="#e3b0a0" stroke-width="2"/><path d="M463,553 H467" stroke="#e3b0a0" stroke-width="2"/><path d="M467,553 C473,553 478.3,555.3 478.2,558.1 C478,561 471.5,562 467.8,565.2" fill="none" stroke="#ff0000" stroke-width="2.3"/><path d="M467.8,565.2 L465.3,567.4" stroke="#e3b0a0" stroke-width="2"/><path d="M463,571 H467" stroke="#e3b0a0" stroke-width="2"/><path d="M467,571 C473,571 478.3,573.3 478.2,576.1 C478,579 471.5,580 467.8,583.2" fill="none" stroke="#ff0000" stroke-width="2.3"/><path d="M467.8,583.2 L465.3,585.4" stroke="#e3b0a0" stroke-width="2"/><path d="M463,589 H467" stroke="#e3b0a0" stroke-width="2"/><path d="M467,589 C473,589 478.3,591.3 478.2,594.1 C478,597 471.5,598 467.8,601.2" fill="none" stroke="#ff0000" stroke-width="2.3"/><path d="M467.8,601.2 L465.3,603.4" stroke="#e3b0a0" stroke-width="2"/><path d="M463,607 H467" stroke="#e3b0a0" stroke-width="2"/><path d="M467,607 C473,607 478.3,609.3 478.2,612.1 C478,615 471.5,616 467.8,619.2" fill="none" stroke="#ff0000" stroke-width="2.3"/><path d="M467.8,619.2 L465.3,621.4" stroke="#e3b0a0" stroke-width="2"/><path d="M463,625 H467" stroke="#e3b0a0" stroke-width="2"/><path d="M467,625 C473,625 478.3,627.3 478.2,630.1 C478,633 471.5,634 467.8,637.2" fill="none" stroke="#ff0000" stroke-width="2.3"/><path d="M467.8,637.2 L465.3,639.4" stroke="#e3b0a0" stroke-width="2"/><path d="M463,643 H467" stroke="#e3b0a0" stroke-width="2"/><path d="M467,643 C473,643 478.3,645.3 478.2,648.1 C478,651 471.5,652 467.8,655.2" fill="none" stroke="#ff0000" stroke-width="2.3"/><path d="M467.8,655.2 L465.3,657.4" stroke="#e3b0a0" stroke-width="2"/></svg>
<svg style="left:736px;top:212px" width="20" height="26" viewBox="736 212 20 26"><path d="M740.5,215.5 V232 L744.5,228.3 L747.5,234.5 L749.8,233.4 L746.9,227.4 L752,227.2 Z" fill="#fff" stroke="#000" stroke-width="1.1" stroke-linejoin="miter"/></svg>
<svg style="left:585px;top:62px" width="105" height="90" viewBox="585 62 105 90"><defs><filter id="f1" x="-30%" y="-30%" width="160%" height="160%"><feGaussianBlur stdDeviation="1.6"/></filter></defs><g transform="translate(2.8,3.2)" opacity="0.42" filter="url(#f1)"><line x1="593.6" y1="140.2" x2="671.4046227542498" y2="78.06436377264777" stroke="#000" stroke-width="3.2"/><polygon points="680,71.2 674.28,81.66 668.53,74.47" fill="#000"/></g><line x1="593.6" y1="140.2" x2="672.97" y2="76.82" stroke="#ff0000" stroke-width="2"/><polygon points="680,71.2 674.28,81.66 668.53,74.47" fill="#ff0000"/></svg>
<svg style="left:315px;top:258px" width="120" height="75" viewBox="315 258 120 75"><defs><filter id="f2" x="-30%" y="-30%" width="160%" height="160%"><feGaussianBlur stdDeviation="1.6"/></filter></defs><g transform="translate(2.8,3.2)" opacity="0.42" filter="url(#f2)"><line x1="322.9" y1="322.2" x2="413.6037393042614" y2="271.37696760818056" stroke="#000" stroke-width="3.2"/><polygon points="423.2,266 415.85,275.39 411.36,267.36" fill="#000"/></g><line x1="322.9" y1="322.2" x2="415.35" y2="270.40" stroke="#ff0000" stroke-width="2"/><polygon points="423.2,266 415.85,275.39 411.36,267.36" fill="#ff0000"/></svg>
</body></html>
